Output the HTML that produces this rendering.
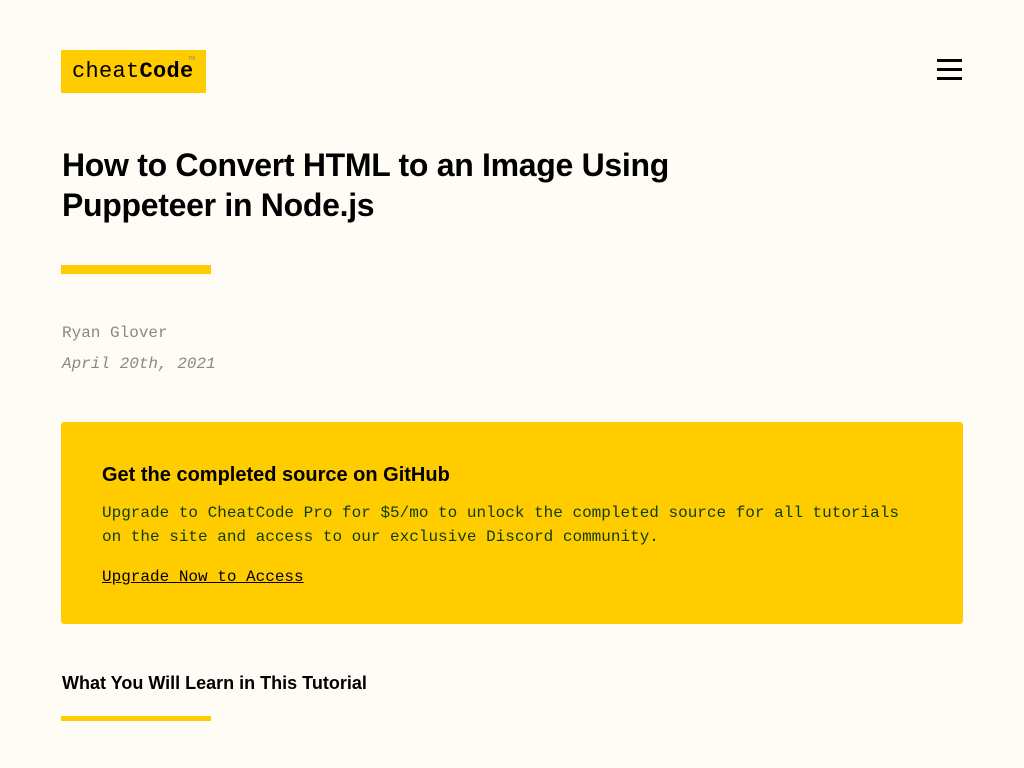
<!DOCTYPE html>
<html><head><style>
body{margin:0;background:#fffcf6;font-family:"Liberation Sans",sans-serif;color:#000;}
.logo{position:absolute;left:61px;top:50px;width:145px;height:43px;background:#ffcc00;}
.logo span{position:absolute;left:11px;top:9px;font-family:"Liberation Mono",monospace;font-size:22px;letter-spacing:0.3px;}
.logo sup{position:absolute;left:127px;top:6px;font-size:5px;color:#886;}
.burger{position:absolute;left:937px;top:59px;width:25px;}
.burger div{height:2.5px;background:#000;margin-bottom:6.5px;}
h1{position:absolute;left:62px;top:145px;margin:0;font-size:32px;line-height:40px;font-weight:bold;width:720px;letter-spacing:-0.3px;}
.bar{position:absolute;left:61px;width:150px;height:9px;background:#ffcc00;}
.meta{position:absolute;left:62px;font-family:"Liberation Mono",monospace;font-size:16px;color:#888;}
.box{position:absolute;left:61px;top:422px;width:902px;height:202px;background:#ffcc00;border-radius:3px;}
.box h3{position:absolute;left:41px;top:42px;margin:0;font-size:20px;}
.box p{position:absolute;left:41px;margin:0;font-family:"Liberation Mono",monospace;font-size:16px;line-height:24px;color:#0e3d0e;}
h4{position:absolute;left:62px;top:673px;margin:0;font-size:18px;}
</style></head><body>
<div class="logo"><span>cheat<b>Code</b></span><sup>TM</sup></div>
<div class="burger"><div></div><div></div><div></div></div>
<h1>How to Convert HTML to an Image Using Puppeteer in Node.js</h1>
<div class="bar" style="top:265px"></div>
<div class="meta" style="top:324px">Ryan Glover</div>
<div class="meta" style="top:355px;font-style:italic">April 20th, 2021</div>
<div class="box">
<h3>Get the completed source on GitHub</h3>
<p style="top:79px">Upgrade to CheatCode Pro for $5/mo to unlock the completed source for all tutorials<br>on the site and access to our exclusive Discord community.</p>
<p style="top:143px;color:#000;text-decoration:underline">Upgrade Now to Access</p>
</div>
<h4>What You Will Learn in This Tutorial</h4>
<div class="bar" style="top:716px;height:5px"></div>
</body></html>
